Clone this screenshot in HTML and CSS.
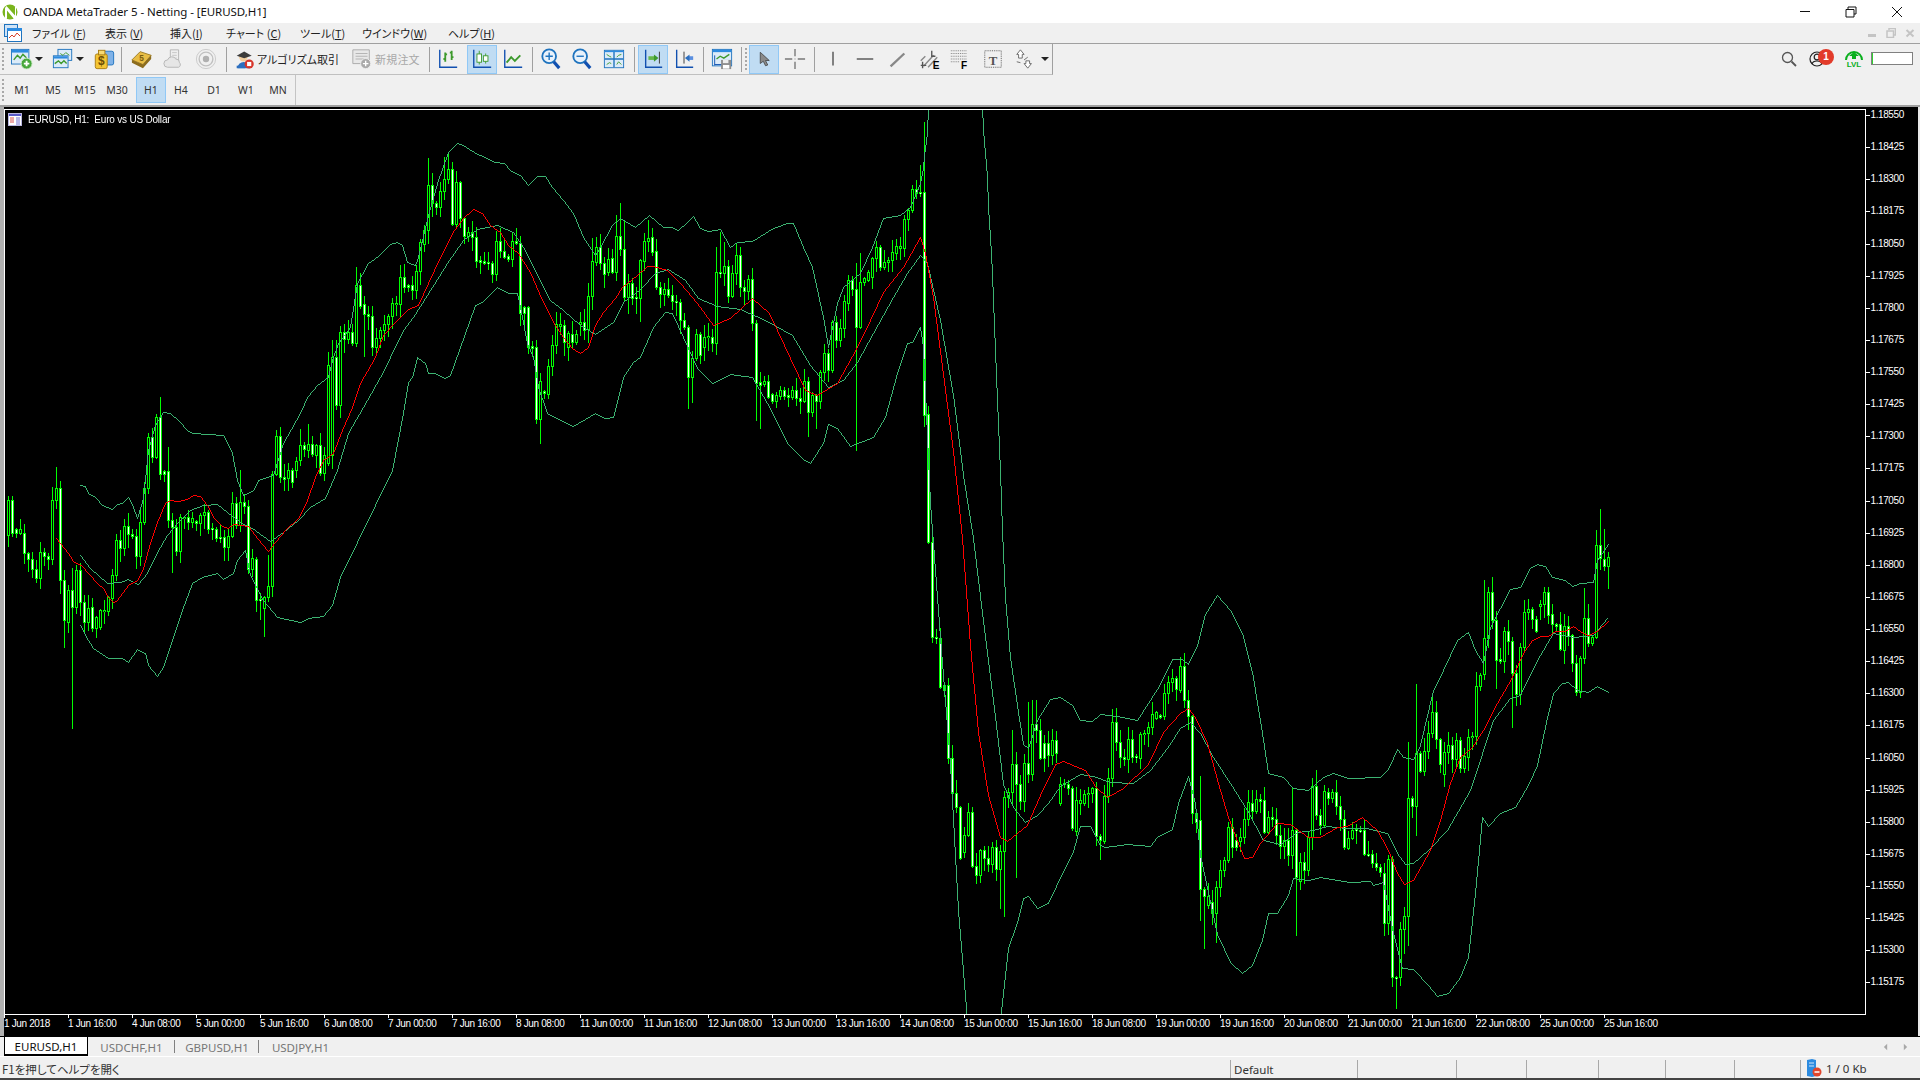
FILE: index.html
```html
<!DOCTYPE html>
<html lang="ja">
<head>
<meta charset="utf-8">
<title>OANDA MetaTrader 5 - Netting - [EURUSD,H1]</title>
<link rel="stylesheet" href="styles.css">
</head>
<body>
<div class="app">
  <header class="titlebar">
    <svg class="logo" viewBox="0 0 16 16"><circle cx="8" cy="8" r="7.5" fill="#7ab51d"/><path d="M3 14V4l1.500-2L13 11.500V2l1 1v11l-2 1L5 6.500V15z" fill="#fff"/></svg>
    <span class="title-text">OANDA MetaTrader 5 - Netting - [EURUSD,H1]</span>
    <div class="winctl">
      <span class="winbtn"><svg viewBox="0 0 12 12" width="12" height="12"><path d="M1 5.500h10" stroke="#111" fill="none"/></svg></span>
      <span class="winbtn"><svg viewBox="0 0 12 12" width="12" height="12"><path d="M3 3V1h8v7H9M1 3.500h8v7.500H1z" stroke="#111" fill="none"/></svg></span>
      <span class="winbtn"><svg viewBox="0 0 12 12" width="12" height="12"><path d="M1 1l10 10M11 1L1 11" stroke="#111" fill="none"/></svg></span>
    </div>
  </header>

  <nav class="menubar">
    <svg class="menu-icon" viewBox="0 0 18 18"><rect x="0.500" y="0.500" width="13" height="12" fill="#cfe3f7" stroke="#1e73be"/><rect x="3.500" y="4.500" width="14" height="13" fill="#fff" stroke="#1e73be"/><rect x="3" y="4" width="15" height="3" fill="#2c8be0"/><path d="M5 14l3-3 2 2 3-4 3 3" stroke="#d6402a" fill="none"/></svg>
    <span class="menu-item m1">ファイル (<u>F</u>)</span>
    <span class="menu-item m2">表示 (<u>V</u>)</span>
    <span class="menu-item m3">挿入(<u>I</u>)</span>
    <span class="menu-item m4">チャート (<u>C</u>)</span>
    <span class="menu-item m5">ツール(<u>T</u>)</span>
    <span class="menu-item m6">ウインドウ(<u>W</u>)</span>
    <span class="menu-item m7">ヘルプ(<u>H</u>)</span>
    <div class="mdi">
      <svg viewBox="0 0 10 10" width="10" height="10"><path d="M1 7.500h8" stroke="#c4c4c4" stroke-width="3" fill="none"/></svg>
      <svg viewBox="0 0 10 10" width="10" height="10"><path d="M3 2V0.500h6.500V7H8M1 3h6.500v6.500H1z" stroke="#c4c4c4" stroke-width="1.500" fill="none"/></svg>
      <svg viewBox="0 0 10 10" width="10" height="10"><path d="M1.500 2l7 6.500M8.500 2l-7 6.500" stroke="#c4c4c4" stroke-width="2" fill="none"/></svg>
    </div>
  </nav>

  <div class="toolbar-row">
    <div class="toolbar main-toolbar">
      <span class="handle"></span>
      <span class="btn w24"><svg viewBox="0 0 24 24" class="ico"><rect x="0.500" y="1.500" width="19" height="16" fill="#dcebf9" stroke="#1e73be"/><rect x="1" y="2" width="18" height="3" fill="#2c8be0"/><path d="M3 13l4-5 3 3 3-4 4 4" stroke="#3d9a2d" stroke-width="1.500" fill="none"/><circle cx="17" cy="17" r="6" fill="#46a73a" stroke="#d8ecd2"/><path d="M14 17h6M17 14v6" stroke="#fff" stroke-width="2"/></svg></span>
      <span class="btn w17 caret-left"><i class="caret"></i></span>
      <span class="btn w24"><svg viewBox="0 0 24 24" class="ico"><rect x="6.500" y="1.500" width="15" height="12" fill="#dcebf9" stroke="#1e73be"/><rect x="1.500" y="8.500" width="16" height="13" fill="#dcebf9" stroke="#1e73be"/><rect x="2" y="9" width="15" height="2.500" fill="#2c8be0"/><path d="M3 17l4-3 3 3 3-3 3 3" stroke="#3d9a2d" stroke-width="1.500" fill="none"/><path d="M9 6l3 2 3-3 4 3" stroke="#3d9a2d" fill="none"/></svg></span>
      <span class="btn w17 caret-left"><i class="caret"></i></span>
      <span class="btn w24"><svg viewBox="0 0 24 24" class="ico"><rect x="9.500" y="3.500" width="13" height="15" rx="2" fill="#7fb2e8" stroke="#1e73be"/><rect x="2.500" y="6.500" width="13" height="16" rx="2" fill="#f4c534" stroke="#a77b10"/><rect x="6" y="2.500" width="7" height="5" fill="#f7da72" stroke="#a77b10"/><text x="9" y="19" class="dollar">$</text></svg></span>
      <span class="sep s10"></span>
      <span class="btn w32"><svg viewBox="0 0 24 24" class="ico"><path d="M1 13L10 4l12 4-9 10z" fill="#e8bd45" stroke="#9b7a22"/><path d="M1 13v3l12 6 9-10V8l-9 10z" fill="#8c6c1d"/><text x="9" y="14" class="book5">5</text></svg></span>
      <span class="btn w32"><svg viewBox="0 0 24 24" class="ico"><path d="M8 2h9v12H8z" fill="#eee" stroke="#b4b4b4"/><path d="M10 5h5M10 8h5M10 11h5" stroke="#c4c4c4"/><path d="M5 21a4 4 0 010-8 5 5 0 019-1 4 4 0 014 4 3 3 0 01-1 5z" fill="#e6e6e6" stroke="#b4b4b4"/></svg></span>
      <span class="btn w32"><svg viewBox="0 0 24 24" class="ico"><circle cx="12" cy="12" r="10.500" fill="none" stroke="#c8c8c8"/><circle cx="12" cy="12" r="7.500" fill="none" stroke="#c0c0c0" stroke-width="1.500"/><circle cx="12" cy="12" r="3.500" fill="#b0b0b0"/></svg></span>
      <span class="sep s8"></span>
      <span class="btn textbtn algo"><svg viewBox="0 0 24 24" class="ico"><circle cx="10" cy="10" r="5" fill="#f2cfa0"/><path d="M2 8l9-5 9 5-9 3z" fill="#3c3c3c"/><path d="M3 23a7 7 0 0115 0z" fill="#2c6fc0"/><path d="M2 20h10v3H2z" fill="#2c6fc0"/><circle cx="17" cy="18" r="5.500" fill="#d7352a"/><rect x="14.500" y="15.500" width="5" height="5" fill="#fff"/></svg><span class="tb-label">アルゴリズム取引</span></span>
      <span class="btn textbtn order"><svg viewBox="0 0 24 24" class="ico"><path d="M2 2h18v15H2z" fill="#e8e8e8" stroke="#a8a8a8"/><path d="M5 6h13M5 9h13M5 12h9" stroke="#b0b0b0"/><circle cx="16" cy="17" r="5.500" fill="#a9a9a9" stroke="#eee"/><path d="M13 17h6M16 14v6" stroke="#fff" stroke-width="1.500"/></svg><span class="tb-label off">新規注文</span></span>
      <span class="sep s8"></span>
      <span class="btn w30"><svg viewBox="0 0 24 24" class="ico"><path d="M3 2v19h19" stroke="#1150b0" stroke-width="1.500" fill="none"/><path d="M9 5v10M7 12h2M9 7h2M16 3v10M14 5h2M16 10h2" stroke="#3d9a2d" stroke-width="2" fill="none"/></svg></span>
      <span class="btn w30 ml4 active"><svg viewBox="0 0 24 24" class="ico"><path d="M3 2v19h19" stroke="#1150b0" stroke-width="1.500" fill="none"/><path d="M9 3v15M16 6v11" stroke="#3d9a2d"/><rect x="6.500" y="6.500" width="5" height="9" fill="#fff" stroke="#3d9a2d"/><rect x="13.500" y="8.500" width="5" height="6" fill="#fff" stroke="#3d9a2d"/></svg></span>
      <span class="btn w30 ml1"><svg viewBox="0 0 24 24" class="ico"><path d="M3 2v19h19" stroke="#1150b0" stroke-width="1.500" fill="none"/><path d="M5 16l5-6 4 4 6-6" stroke="#3d9a2d" stroke-width="2" fill="none"/></svg></span>
      <span class="sep s8"></span>
      <span class="btn w30"><svg viewBox="0 0 24 24" class="ico"><circle cx="10" cy="9" r="7.500" fill="#e9f2fb" stroke="#1e73be" stroke-width="2"/><path d="M6 9h8M10 5v8" stroke="#1e73be" stroke-width="1.500"/><path d="M15 15l6 7" stroke="#1150b0" stroke-width="3.500"/></svg></span>
      <span class="btn w32"><svg viewBox="0 0 24 24" class="ico"><circle cx="10" cy="9" r="7.500" fill="#e9f2fb" stroke="#1e73be" stroke-width="2"/><path d="M6 9h8" stroke="#1e73be" stroke-width="1.500"/><path d="M15 15l6 7" stroke="#1150b0" stroke-width="3.500"/></svg></span>
      <span class="btn w32"><svg viewBox="0 0 24 24" class="ico"><rect x="1.500" y="2.500" width="21" height="19" fill="#dcebf9" stroke="#1e73be"/><path d="M12 3v18M2 12h20" stroke="#1e73be" stroke-width="1.500"/><rect x="2" y="3" width="20" height="1.500" fill="#2c8be0"/><path d="M4 7l3 2 2 1M15 10l2-2 3-1M4 18l3-2 2 1M15 18l2-3 3 3" stroke="#3d9a2d" fill="none"/></svg></span>
      <span class="sep s8"></span>
      <span class="btn w30 active"><svg viewBox="0 0 24 24" class="ico"><path d="M4 2v19h18" stroke="#1150b0" stroke-width="1.500" fill="none"/><path d="M19 4v13" stroke="#333"/><rect x="7" y="9" width="7" height="4" fill="#66b84a"/><path d="M13 7l5 4-5 4z" fill="#3d9a2d"/></svg></span>
      <span class="btn w30 ml1"><svg viewBox="0 0 24 24" class="ico"><path d="M4 2v19h18" stroke="#1150b0" stroke-width="1.500" fill="none"/><path d="M12 4v13" stroke="#333"/><rect x="17" y="9" width="5" height="4" fill="#5a8fe0"/><path d="M18 7l-5 4 5 4z" fill="#2c6fc0"/></svg></span>
      <span class="sep s8"></span>
      <span class="btn w30"><svg viewBox="0 0 24 24" class="ico"><rect x="1.500" y="1.500" width="21" height="18" fill="#dcebf9" stroke="#1e73be"/><rect x="2" y="2" width="20" height="2.500" fill="#2c8be0"/><path d="M4 8v11M4 18h8" stroke="#1150b0"/><path d="M6 12l4-3 4 2 6-4" stroke="#3d9a2d" stroke-width="1.500" fill="none"/><path d="M11 13h11v10H11z" fill="#8d8d8d"/><rect x="13" y="13" width="6" height="3.500" fill="#eee"/><rect x="13" y="18.500" width="7" height="4" fill="#fff"/></svg></span>
      <span class="sep s8"></span>
      <span class="handle inner"></span>
      <span class="btn w30 active"><svg viewBox="0 0 24 24" class="ico small"><path d="M7 3v15l4-3 3 6 3-1-3-6h5z" fill="#8a8a8a" stroke="#3c3c3c"/></svg></span>
      <span class="btn w30 ml1"><svg viewBox="0 0 24 24" class="ico"><path d="M12 1v8M12 15v8M1 12h8M15 12h8" stroke="#777" stroke-width="1.500"/><path d="M12 11.500v1" stroke="#777"/></svg></span>
      <span class="sep s8"></span>
      <span class="btn w30"><svg viewBox="0 0 24 24" class="ico"><path d="M12 4v15" stroke="#777" stroke-width="2"/></svg></span>
      <span class="btn w30 ml2"><svg viewBox="0 0 24 24" class="ico"><path d="M3 12h18" stroke="#777" stroke-width="2"/></svg></span>
      <span class="btn w30 ml2"><svg viewBox="0 0 24 24" class="ico"><path d="M5 20L20 6" stroke="#888" stroke-width="2.500"/></svg></span>
      <span class="btn w30 ml2"><svg viewBox="0 0 24 24" class="ico"><path d="M3 14l5-5M6 20l11-12M11 21l10-11" stroke="#888" stroke-width="1.500"/><path d="M15 3v6h4M5 15v7M3 19h6" stroke="#555" stroke-width="1.500" fill="none"/><text x="16" y="23" class="letter">E</text></svg></span>
      <span class="btn w30 ml1"><svg viewBox="0 0 24 24" class="ico"><path d="M2 3h18M2 6h18M2 9h18M2 12h18M2 15h10" stroke="#777" stroke-dasharray="1 1"/><text x="13" y="23" class="letter">F</text></svg></span>
      <span class="btn w30 ml3"><svg viewBox="0 0 24 24" class="ico"><rect x="3" y="3" width="18" height="18" fill="none" stroke="#555" stroke-dasharray="1 1"/><text x="12" y="18" class="letter-t">T</text></svg></span>
      <span class="btn w30 ml2"><svg viewBox="0 0 24 24" class="ico"><path d="M7 2l4 5H9v4H5V7H3zM15 22l-4-5h2v-3h4v3h2zM3 15l4 1M11 13l4-3" stroke="#666" fill="#fff"/></svg></span>
      <span class="btn w10 caret-left"><i class="caret"></i></span>
    </div>
    <div class="spacer"></div>
    <div class="status-tools">
      <svg viewBox="0 0 16 16" width="16" height="16"><circle cx="6.500" cy="6.500" r="5" fill="none" stroke="#555" stroke-width="1.300"/><path d="M10.500 10.500l4.500 4.500" stroke="#555" stroke-width="1.800"/></svg>
      <span class="user">
        <svg viewBox="0 0 16 16" width="16" height="16"><circle cx="8" cy="8" r="7" fill="none" stroke="#222" stroke-width="1.200"/><circle cx="8" cy="6" r="2.800" fill="none" stroke="#222" stroke-width="1.200"/><path d="M3 13c1-4 9-4 10 0" fill="none" stroke="#222" stroke-width="1.200"/></svg>
        <b class="badge">1</b>
      </span>
      <span class="lvl">
        <svg viewBox="0 0 20 12" width="20" height="12"><path d="M2 11a8 8 0 0116 0" fill="none" stroke="#0aaf1e" stroke-width="2"/><path d="M10 3l5 4h-3v3H8V7H5z" fill="#0aaf1e"/></svg>
        <em>LVL</em>
      </span>
      <span class="meter"><i></i></span>
    </div>
  </div>

  <div class="toolbar-row second">
    <div class="toolbar period-toolbar">
      <span class="handle"></span>
      <span class="period p30">M1</span><span class="period">M5</span><span class="period">M15</span><span class="period">M30</span><span class="period p30 gap3 active">H1</span><span class="period p30">H4</span><span class="period gap2">D1</span><span class="period">W1</span><span class="period">MN</span>
    </div>
  </div>

  <main class="chart">
    <div class="plot">
      <canvas id="chart-canvas" width="1860" height="904"></canvas>
      <div class="chart-label">
        <svg viewBox="0 0 14 13" width="14" height="13"><rect x="0.500" y="0.500" width="13" height="12" fill="#fff" stroke="#b9b6df"/><rect x="1" y="1" width="12" height="2" fill="#5a5ac8"/><path d="M2 5h4M2 7h4M2 9h4" stroke="#d9534f"/><path d="M8 5h4M8 7h4M8 9h4M8 11h4" stroke="#6f6fd0"/></svg>
        <span>EURUSD, H1:&nbsp; Euro vs US Dollar</span>
      </div>
    </div>
    <div class="price-axis">
      <span>1.18550</span><span>1.18425</span><span>1.18300</span><span>1.18175</span><span>1.18050</span><span>1.17925</span><span>1.17800</span><span>1.17675</span><span>1.17550</span><span>1.17425</span><span>1.17300</span><span>1.17175</span><span>1.17050</span><span>1.16925</span><span>1.16800</span><span>1.16675</span><span>1.16550</span><span>1.16425</span><span>1.16300</span><span>1.16175</span><span>1.16050</span><span>1.15925</span><span>1.15800</span><span>1.15675</span><span>1.15550</span><span>1.15425</span><span>1.15300</span><span>1.15175</span>
    </div>
    <div class="time-axis">
      <span>1 Jun 2018</span><span>1 Jun 16:00</span><span>4 Jun 08:00</span><span>5 Jun 00:00</span><span>5 Jun 16:00</span><span>6 Jun 08:00</span><span>7 Jun 00:00</span><span>7 Jun 16:00</span><span>8 Jun 08:00</span><span>11 Jun 00:00</span><span>11 Jun 16:00</span><span>12 Jun 08:00</span><span>13 Jun 00:00</span><span>13 Jun 16:00</span><span>14 Jun 08:00</span><span>15 Jun 00:00</span><span>15 Jun 16:00</span><span>18 Jun 08:00</span><span>19 Jun 00:00</span><span>19 Jun 16:00</span><span>20 Jun 08:00</span><span>21 Jun 00:00</span><span>21 Jun 16:00</span><span>22 Jun 08:00</span><span>25 Jun 00:00</span><span>25 Jun 16:00</span>
    </div>
  </main>

  <div class="tabs">
    <span class="tab active">EURUSD,H1</span>
    <span class="tab t2">USDCHF,H1</span>
    <span class="tab t3">GBPUSD,H1</span>
    <span class="tab t4">USDJPY,H1</span>
    <div class="tab-arrows">
      <svg viewBox="0 0 6 8" width="6" height="8"><path d="M5 0v8L1 4z" fill="#a8a8a8"/></svg>
      <svg viewBox="0 0 6 8" width="6" height="8"><path d="M1 0v8l4-4z" fill="#a8a8a8"/></svg>
    </div>
  </div>

  <footer class="statusbar">
    <span class="cell first">F1を押してヘルプを開く</span>
    <span class="cell">Default</span>
    <span class="cell"></span><span class="cell"></span><span class="cell"></span><span class="cell"></span><span class="cell"></span>
    <span class="cell"></span>
    <span class="cell conn"><svg viewBox="0 0 16 18" width="16" height="18"><path d="M1 1l5-1 4 1v16l-4 1-5-1z" fill="#2c8be0"/><path d="M3 4h5M3 7h5" stroke="#cfe6fb"/><circle cx="11" cy="13" r="4.500" fill="#e0452c"/><path d="M8.500 13h5" stroke="#fff" stroke-width="1.500"/></svg><span>1 / 0 Kb</span></span>
  </footer>
</div>
<script src="chart.js"></script>
</body>
</html>
```
FILE: styles.css
```css
* { box-sizing: border-box; }
html, body { margin: 0; padding: 0; width: 1920px; height: 1080px; overflow: hidden; background: #f0f0f0; }
body { font-family: "Noto Sans", "Noto Sans CJK JP", sans-serif; color: #222; }
.app { width: 1920px; height: 1080px; display: flex; flex-direction: column; }

.titlebar { height: 23px; flex: none; background: #fff; display: flex; align-items: center; padding-left: 2px; }
.logo { width: 16px; height: 16px; flex: none; }
.title-text { margin-left: 5px; font-size: 11.500px; font-family: "Noto Sans", sans-serif; color: #111; letter-spacing: -0.06px; }
.winctl { margin-left: auto; display: flex; }
.winbtn { width: 46px; height: 23px; display: flex; align-items: center; justify-content: center; }

.menubar { height: 21px; flex: none; background: #f0f0f0; border-bottom: 1px solid #a0a0a0; display: flex; align-items: center; position: relative; padding-left: 4px; font-size: 11px; font-family: "Noto Sans CJK JP", sans-serif; font-feature-settings: "palt"; color: #222; }
.menu-icon { width: 18px; height: 18px; flex: none; }
.menu-item { flex: none; white-space: nowrap; }
.m1 { margin-left: 10px; width: 73px; }
.m2 { width: 65px; }
.m3 { width: 56px; }
.m4 { width: 74px; }
.m5 { width: 62px; }
.m6 { width: 86px; }
.m7 { width: 60px; }
.mdi { margin-left: auto; display: flex; gap: 9px; padding-right: 5px; align-items: center; }

.toolbar-row { height: 31px; flex: none; display: flex; align-items: stretch; background: #f0f0f0; }
.toolbar-row.second { height: 32px; border-bottom: 2px solid #a0a0a0; }
.toolbar { display: flex; align-items: center; position: relative; background: #f0f0f0; }
.main-toolbar { width: 1053px; padding-left: 10px; border-right: 1px solid #a0a0a0; border-bottom: 1px solid #c0c0c0; }
.period-toolbar { width: 296px; padding-left: 7px; border-right: 1px solid #c4c4c4; }
.handle { position: absolute; left: 2px; top: 4px; bottom: 4px; width: 2px; background-image: linear-gradient(#a8a8a8 50%, transparent 50%); background-size: 2px 4px; }
.handle.inner { position: static; height: 22px; margin: 0 2px 0 0; flex: none; }
.spacer { flex: 1; }

.btn { height: 29px; display: flex; align-items: center; justify-content: center; flex: none; border: 1px solid transparent; }
.btn.active { background: #c0dcf3; border-color: #90c8f6; }
.w10 { width: 10px; } .w17 { width: 17px; } .w24 { width: 24px; } .w30 { width: 30px; } .w32 { width: 32px; }
.ml1 { margin-left: 1px; } .ml2 { margin-left: 2px; } .ml3 { margin-left: 3px; } .ml4 { margin-left: 4px; }
.caret-left { justify-content: flex-start; }
.ico { width: 22px; height: 22px; }
.ico.small { width: 18px; height: 18px; }
.caret { display: block; width: 0; height: 0; border: 4px solid transparent; border-top: 4px solid #222; border-bottom: 0; }
.sep { flex: none; height: 25px; position: relative; }
.sep::after { content: ""; position: absolute; left: 50%; top: 0; bottom: 0; width: 1px; background: #a0a0a0; }
.s8 { width: 8px; } .s10 { width: 10px; }
.textbtn { justify-content: flex-start; gap: 2px; }
.algo { width: 110px; padding-left: 4px; }
.order { width: 85px; padding-left: 10px; }
.tb-label { font-family: "Noto Sans CJK JP", sans-serif; font-size: 11px; font-feature-settings: "palt"; color: #222; white-space: nowrap; }
.tb-label.off { color: #a8a8a8; letter-spacing: 0.2px; }
.dollar { font: bold 13px "Liberation Sans", sans-serif; fill: #6b4d05; text-anchor: middle; }
.book5 { font: bold 9px "Liberation Sans", sans-serif; fill: #7a5c10; }
.letter { font: bold 11px "Liberation Sans", sans-serif; fill: #000; }
.letter-t { font: bold 14px "Liberation Serif", serif; fill: #555; text-anchor: middle; }

.status-tools { display: flex; align-items: center; padding-right: 7px; height: 29px; }
.user { position: relative; margin-left: 12px; display: flex; }
.badge { position: absolute; left: 9px; top: -2px; width: 16px; height: 16px; border-radius: 50%; background: #e23b2a; color: #fff; font: bold 10px/16px "Liberation Sans", sans-serif; text-align: center; }
.lvl { margin-left: 18px; display: flex; flex-direction: column; align-items: center; width: 22px; }
.lvl em { font: bold 8px/8px "Liberation Sans", sans-serif; color: #0aaf1e; }
.meter { margin-left: 6px; width: 42px; height: 13px; background: #fff; border: 1px solid #808080; display: block; }
.meter i { display: block; width: 1px; height: 100%; background: #30d030; }

.period { width: 32px; height: 26px; flex: none; display: flex; align-items: center; justify-content: center; font-size: 10.500px; color: #333; font-family: "Noto Sans", sans-serif; border: 1px solid transparent; }
.period.p30 { width: 30px; }
.period.gap3 { margin-left: 3px; }
.period.gap2 { margin-left: 2px; }
.period.active { background: #c0dcf3; border-color: #90c8f6; }

.chart { flex: 1; min-height: 0; background: #000; padding-top: 2px; border-left: 4px solid #b0b0b0; border-right: 2px solid #e8e8e8; display: grid; grid-template-columns: 1862px 52px; grid-template-rows: 906px 21px; }
.plot { position: relative; border: 1px solid #fff; overflow: hidden; background: #000; }
.plot canvas { display: block; }
.chart-label { position: absolute; left: 3px; top: 3px; display: flex; align-items: center; gap: 6px; color: #fff; font: 10px "Liberation Sans", sans-serif; letter-spacing: -0.2px; white-space: nowrap; }
.price-axis { display: flex; flex-direction: column; color: #fff; font: 10px/12px "Liberation Sans", sans-serif; letter-spacing: -0.4px; }
.price-axis span { height: 32.130px; display: block; position: relative; padding-left: 4.500px; flex: none; }
.price-axis span::before { content: ""; position: absolute; left: 0; top: 6px; width: 4px; height: 1px; background: #fff; }
.time-axis { grid-column: 1 / 3; display: flex; color: #fff; font: 10px/12px "Liberation Sans", sans-serif; letter-spacing: -0.35px; }
.time-axis span { width: 64px; flex: none; position: relative; padding-top: 3px; white-space: nowrap; height: 21px; }
.time-axis span::before { content: ""; position: absolute; left: 0; top: -1px; width: 1px; height: 4px; background: #fff; }

.tabs { height: 21px; flex: none; border-top: 1px solid #000; border-bottom: 1px solid #fff; background: #f0f0f0; display: flex; align-items: stretch; padding-left: 4px; font: 11.500px "Noto Sans", sans-serif; color: #777; position: relative; }
.tab { display: flex; align-items: center; justify-content: center; flex: none; position: relative; padding-top: 1px; }
.tab.active { width: 84px; color: #111; background: #fff; border-left: 1px solid #000; border-right: 1px solid #000; border-bottom: 2px solid #000; }
.t2 { width: 87px; } .t3 { width: 84px; } .t4 { width: 83px; }
.t2::after, .t3::after { content: ""; position: absolute; right: 0; top: 3px; bottom: 3px; width: 1px; background: #808080; }
.tab-arrows { margin-left: auto; width: 37px; display: flex; align-items: center; gap: 15px; padding-right: 12px; }

.statusbar { height: 23px; flex: none; border-bottom: 2px solid #444; background: #f0f0f0; display: grid; grid-template-columns: 1230px 127px 99px 70px 72px 67px 69px 66px 1fr; align-items: stretch; font: 11.500px "Noto Sans", "Noto Sans CJK JP", sans-serif; color: #333; }
.cell { display: flex; align-items: center; padding-left: 4px; padding-top: 3px; position: relative; white-space: nowrap; }
.cell + .cell::before { content: ""; position: absolute; left: 0; top: 3px; bottom: 0; width: 1px; background: #a8a8a8; }
.cell.first { padding-left: 2px; font-family: "Noto Sans CJK JP", sans-serif; font-feature-settings: "palt"; }
.conn { gap: 4px; padding-left: 6px; padding-top: 1px; }
```
FILE: chart.js
```js
(function () {
  var canvas = document.getElementById('chart-canvas');
  var ctx = canvas.getContext('2d');
  ctx.translate(-5, -110);

  // Bodies per bar: [top, bottom] in chart pixels; a negative top is a rising bar.
  var SEGS = [
    [8, [-500,535,500,533,529,533,-529,533,533,553,553,559,559,569,569,578,-552,578,552,556,556,559,-500,559,-488,500,488,580,580,620,-590,622,590,607,-570,607,570,602,602,622,-608,622,607,628,-617,628,-610,627,-610,611,-597,611,-575,598,-540,575,540,548,-526,548,526,534,534,536,536,556,-522,556,-488,522,-437,488,437,457,-417,457,417,474,471,474,471,520,520,527,527,551,-517,551,-517,518,517,522,-518,522,521,523,-515,523,-512,515,512,529,528,529,529,538,537,538,537,547,-536,547,-503,536,503,525,-502,525,502,506,506,569,-558,569,559,600,599,600,-597,608,-586,597,-474,586,-436,474,436,477,477,479,-470,478,470,482,-461,470,-445,460,445,449,-444,450,444,454,-445,455,445,473,-455,473]],
    [328, [-365,463,-357,455,357,405,-332,405,332,339,-332,339,332,343,-285,343,285,306,304,314,314,316,316,347,-338,347,-330,338,-324,330,-316,324,-303,316,-303,304,-277,304,277,287,285,287,285,290,-271,290,-242,271,-230,244,-185,230,185,203,203,207,-191,207,-179,191,-169,179,169,224,-182,224,182,218,218,236,-232,236,232,237,237,261,260,262,261,263,262,263,263,274,-241,274,241,251,251,257,256,259,-241,259,241,243,243,313,307,313,307,347,346,348,347,419,-381,419,391,393,-366,394,-345,366,-324,345,-324,326,325,342,-333,347,334,342,-334,342,-322,324,322,330,-296,329,-261,296,-247,262,247,263,263,274,-259,272,258,272,-236,272,236,249,249,297,-283,297,283,298]],
    [636, [297,298,-260,298,-241,261,-238,241,237,252,251,287,287,294,-289,294,289,295,295,301,301,302,302,320,320,327,327,377,-358,377,-334,358,334,355,-337,347,-336,337,337,343,-272,343,272,273,-266,273,266,296,-273,296,-255,273,255,287,287,291,-279,291,279,323,323,383,382,385,-381,384,381,397,394,401,-395,401,-390,396,390,396,395,397,-390,397,390,398,398,401,-381,401,381,412,-395,412,395,401,-372,401,-353,372,353,370,-322,370,322,340,-328,340,-301,328,-280,303,280,289,289,327,-282,327,-278,282,-272,280,-258,277,-247,258,247,267,-262,267,-260,262,-252,260,-246,253,-246,248,-219,248,-210,219,-189,210,189,193,192,193,192,415,414,542,542,637,637,638,638,687,685,690]],
    [948, [685,758,758,793,793,807,807,858,-835,852,-812,835,812,866,866,875,-850,875,850,858,858,864,-847,864,847,869,-851,869,-797,851,-792,797,-764,792,764,784,784,801,-763,801,763,774,-724,774,724,730,730,758,743,758,743,755,-740,755,740,753,-784,803,-783,784,784,788,788,828,-800,831,-800,803,-794,803,-793,794,-788,793,788,836,836,840,-796,841,-778,796,-722,778,722,742,742,757,757,759,-739,759,739,757,756,757,-734,758,-733,734,-727,733,-714,727,-712,718,715,717,-693,716,-682,693,-678,682,678,689,-666,690,666,700,700,716]],
    [1192, [716,813,813,822,820,889,889,896,-896,905,902,913,-887,913,-870,887,-860,870,-827,860,827,847,840,847,-837,841,-819,837,-802,819,803,811,-799,811,799,801,800,832,-817,832,817,819,819,835,835,846,-840,846,840,855,-830,855,830,877,-862,881,862,870,-837,870,-786,837,786,815,815,825,-791,825,792,798,-792,798,792,806,806,819,819,847,-838,848,-830,838,829,830,830,831,830,854,854,855,854,863,863,867,867,872,873,923,-859,923,859,977,977,978,-929,977,-916,929,-798,916,798,806,-753,806,753,771,-751,771,-733,751,-712,733,712,739,739,764,-752,774,-745,752,745,759,-740,759,740,768,-756,768,-737,757,-736,737]],
    [1476, [-686,736,-675,686,-638,674,-592,638,592,620,620,660,659,661,-631,661,631,641,641,673,673,694,-647,694,-612,647,-609,612,609,619,619,631,-604,606,-592,604,592,615,614,624,624,626,624,649,-626,650,626,636,635,663,663,692,-658,692,-618,658,618,643,-637,643,-545,637,545,558,559,566,-557,566]]
  ];

  // Wicks that stand out: x -> [high, low].
  var WICKS = {
    56:[467],64:[0,647],68:[0,632],72:[568,728],160:[397],168:[447],172:[0,572],240:[470],256:[0,611],260:[0,619],264:[0,636],268:[555],276:[430],300:[429],308:[424],
    332:[340],336:[340],356:[267],364:[0,356],428:[158],444:[157],448:[153],452:[162],540:[0,443],592:[238],596:[237],616:[215],620:[203],624:[220],628:[0,313],636:[0,313],640:[0,321],644:[233],648:[220],652:[228],
    688:[0,408],692:[0,402],716:[247],720:[232],724:[242],756:[0,420],760:[0,428],808:[0,436],816:[0,428],856:[263,450],860:[253],912:[185],920:[165],924:[122],
    1000:[0,908],1004:[0,916],1012:[730],1016:[0,877],1024:[0,811],1028:[702],1032:[700],1036:[700],1100:[0,859],1116:[708],1180:[657],1200:[776,920],1204:[0,948],1216:[0,942],
    1292:[788],1296:[0,935],1312:[778],1316:[770],1396:[0,1008],1404:[0,953],1408:[742,945],1416:[684,835],1432:[697],1476:[672],1484:[580],1488:[587],1492:[577],1496:[0,688],1512:[0,727],
    1580:[0,697],1584:[588],1588:[604],1596:[530],1600:[509],1604:[529],1608:[552,588]
  };

  var seed = 20180601;
  function rnd(max) {
    seed = (seed * 1664525 + 1013904223) >>> 0;
    return 1 + Math.floor((seed / 4294967296) * max);
  }

  function candle(x, top, bottom) {
    var rising = top < 0;
    var t = Math.abs(top);
    var w = WICKS[x] || [];
    var hi = w[0] || t - rnd(13);
    var lo = w[1] || bottom + rnd(13);
    ctx.fillStyle = '#00ff00';
    ctx.fillRect(x, hi, 1, lo - hi + 1);
    ctx.fillRect(x - 1, t, 3, bottom - t + 1);
    if (bottom - t >= 1) {
      ctx.fillStyle = rising ? '#000000' : '#ffffff';
      ctx.fillRect(x, t + 1, 1, Math.max(bottom - t - 1, 1));
    }
  }

  SEGS.forEach(function (seg) {
    var x = seg[0], v = seg[1];
    for (var i = 0; i + 1 < v.length; i += 2) {
      candle(x + (i / 2) * 4, v[i], v[i + 1]);
    }
  });

  // One-pixel polyline without anti-aliasing, as the terminal draws it.
  function poly(points, color) {
    ctx.fillStyle = color;
    for (var i = 0; i + 3 < points.length; i += 2) {
      var x0 = points[i], y0 = points[i + 1], x1 = points[i + 2], y1 = points[i + 3];
      var n = Math.max(Math.abs(x1 - x0), Math.abs(y1 - y0), 1);
      for (var k = 0; k <= n; k++) {
        ctx.fillRect(Math.round(x0 + (x1 - x0) * k / n), Math.round(y0 + (y1 - y0) * k / n), 1, 1);
      }
    }
  }

  var BAND = '#3cb371';
  poly([80,485,85,486,88,493,95,497,102,505,112,509,117,504,122,503,128,497,133,507,137,518,143,498,148,450,155,425,163,412,170,413,178,420,187,430,193,433,223,435,232,453,237,480,243,495,253,490,258,480,267,477,273,475,283,443,300,413,307,397,317,385,328,377,332,360,338,343,350,327,357,283,368,263,378,256,390,244,397,242,402,245,407,262,415,265,418,257,428,215,438,180,448,152,457,143,463,145,477,154,483,156,495,162,504,163,510,170,520,175,528,185,537,176,545,176,552,187,563,200,573,213,583,237,595,255,600,247,612,225,620,218,635,227,649,215,663,227,672,227,678,230,687,222,693,216,700,228,708,231,720,229,730,247,737,242,752,241,773,228,787,223,793,223,803,247,812,267,823,317,828,347,837,303,843,287,860,273,872,247,883,218,900,215,910,207,920,183,923,168,924,155,927,133,928,105,982,105,983,130,985,153,987,177,988,207,990,237,992,273,993,300,995,350,997,400,1000,471,1002,530,1005,598,1010,657,1018,712,1023,744,1028,748,1037,720,1050,699,1060,697,1072,705,1080,720,1092,721,1100,714,1117,716,1137,720,1157,689,1172,659,1182,659,1188,664,1197,645,1205,614,1217,595,1230,610,1242,633,1253,677,1255,690,1262,733,1268,773,1283,777,1293,788,1308,790,1323,777,1333,773,1348,778,1380,777,1388,769,1397,749,1403,757,1413,759,1420,745,1433,690,1443,670,1457,640,1468,632,1475,650,1483,663,1490,627,1500,608,1510,589,1520,587,1530,568,1537,564,1545,566,1552,577,1565,580,1572,586,1580,583,1593,582,1597,560,1608,544], BAND);
  poly([80,555,90,568,107,583,120,582,128,579,138,584,147,573,157,552,167,535,177,523,190,510,203,505,217,504,227,512,240,522,252,528,270,541,283,532,298,520,310,507,325,498,337,470,348,433,367,400,380,377,390,357,403,330,413,317,432,287,447,263,463,240,477,229,497,225,513,232,523,247,533,267,550,300,563,310,580,325,595,334,613,322,623,302,640,289,655,273,668,269,685,280,698,298,717,306,740,309,765,320,792,335,810,365,828,387,843,380,857,362,873,333,893,297,907,273,920,255,927,263,940,320,953,395,963,475,973,538,983,621,993,700,1003,784,1013,807,1025,822,1037,815,1048,803,1060,786,1080,774,1093,776,1110,782,1133,783,1150,770,1167,748,1180,728,1190,722,1200,733,1213,757,1230,783,1247,810,1263,840,1280,844,1297,832,1313,830,1327,826,1347,828,1367,828,1387,833,1397,853,1405,864,1413,863,1428,850,1447,830,1470,790,1493,720,1510,698,1520,695,1537,660,1553,633,1573,637,1593,635,1607,618], BAND);
  poly([80,625,85,635,93,648,108,658,122,658,128,662,137,649,145,653,148,665,157,676,163,667,173,637,183,607,192,583,202,577,217,573,223,579,233,573,237,560,245,550,250,575,263,600,277,617,300,622,308,618,323,616,332,605,340,577,392,470,403,413,408,382,412,377,417,357,425,363,428,373,435,373,445,378,450,375,460,347,475,305,482,302,497,287,508,293,517,293,520,307,527,343,533,357,538,387,547,413,560,420,573,426,595,413,605,418,613,417,623,377,633,362,640,357,653,327,665,312,672,313,683,337,697,368,712,383,730,374,752,377,767,403,787,443,803,459,810,463,823,443,828,424,837,428,850,446,873,437,885,417,897,373,907,343,912,342,920,327,923,347,930,503,940,637,950,764,958,910,967,1020,1000,1020,1008,948,1017,922,1023,898,1028,896,1037,908,1048,903,1063,871,1073,851,1080,826,1090,826,1100,845,1105,847,1127,844,1150,846,1157,837,1172,829,1178,803,1188,776,1195,803,1200,855,1217,934,1230,962,1242,973,1252,965,1262,940,1268,913,1277,913,1288,895,1293,878,1308,880,1320,877,1350,882,1370,881,1373,885,1383,882,1393,933,1402,968,1413,969,1428,985,1437,996,1448,993,1460,977,1468,957,1475,893,1482,817,1488,826,1500,813,1515,807,1528,785,1537,765,1547,717,1553,693,1562,683,1568,682,1577,690,1588,692,1597,686,1608,692], BAND);
  poly([56,538,68,553,73,561,82,566,88,573,97,583,103,588,108,597,113,602,117,600,128,585,137,580,143,568,150,543,157,522,165,503,170,500,178,501,187,499,193,495,200,496,207,505,213,517,222,526,228,528,233,524,242,525,248,526,257,538,268,551,275,542,285,530,298,518,307,500,315,477,323,460,333,453,342,430,352,407,360,383,375,357,383,335,395,322,408,309,418,305,428,283,440,257,452,233,463,218,473,209,482,213,490,225,500,232,508,245,518,253,530,272,542,300,553,322,563,337,572,348,580,353,588,347,595,325,603,312,615,298,622,287,637,275,647,266,653,266,667,270,680,283,697,303,713,325,730,318,752,298,768,312,777,330,790,358,805,390,817,395,837,383,857,347,870,320,883,292,903,267,920,237,925,253,933,297,947,405,953,451,962,538,970,645,978,732,988,795,1000,837,1007,841,1017,833,1027,825,1043,788,1055,764,1063,761,1085,770,1095,786,1107,797,1123,788,1148,764,1163,732,1180,713,1188,708,1195,717,1207,743,1218,783,1228,817,1238,843,1244,858,1252,857,1260,843,1277,823,1290,824,1308,837,1320,837,1337,827,1347,826,1362,817,1377,830,1388,850,1397,873,1404,884,1413,880,1430,850,1440,820,1450,783,1460,757,1472,747,1483,730,1497,703,1512,677,1523,653,1532,640,1540,636,1548,636,1555,631,1565,631,1573,626,1580,631,1588,635,1598,630,1608,621], '#ff0000');
})();
```
